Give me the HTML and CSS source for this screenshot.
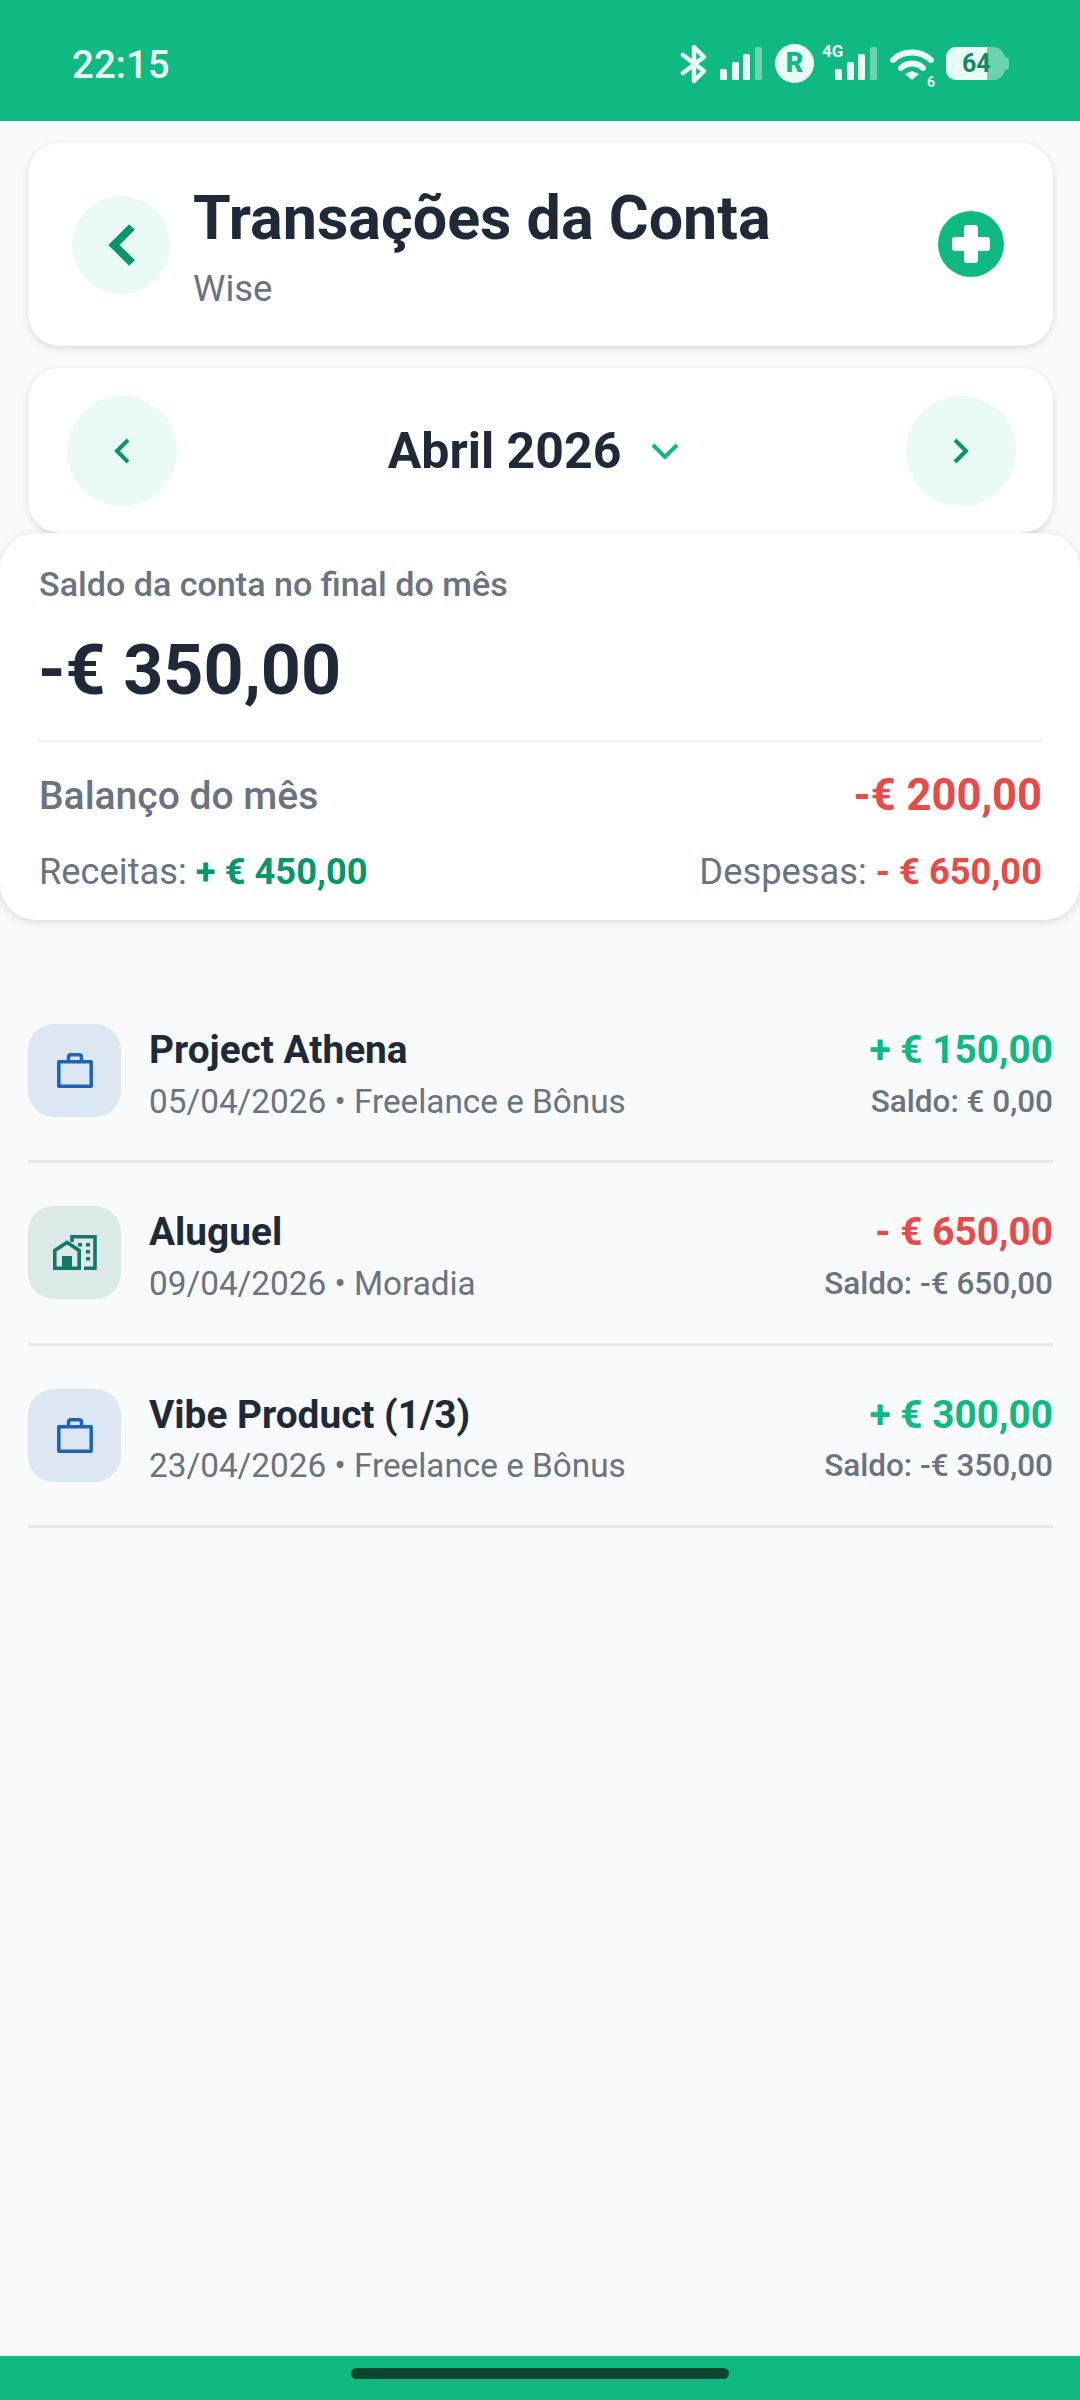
FILE: index.html
```html
<!DOCTYPE html>
<html lang="pt">
<head>
<meta charset="utf-8">
<title>Transações da Conta</title>
<link rel="stylesheet" href="styles.css">
</head>
<body>
<div class="app">
  <header class="status">
    <span class="time">22:15</span>
    <div class="status-icons">
      <svg class="i-bt" width="28" height="40" viewBox="0 0 28 40"><path d="M3 11 L24 27 L14 37 V3 L24 13 L3 29" fill="none" stroke="#e9fbf4" stroke-width="4.500" stroke-linecap="round" stroke-linejoin="round"/></svg>
      <svg class="i-sig" width="42" height="34" viewBox="0 0 42 34"><rect x="0" y="22" width="7" height="11" rx="1.500" fill="#e9fbf4"/><rect x="12" y="15" width="7" height="18" rx="1.500" fill="#e9fbf4"/><rect x="23" y="7" width="7" height="26" rx="1.500" fill="#e9fbf4"/><rect x="35" y="0" width="7" height="33" rx="1.500" fill="#6bd3ae"/></svg>
      <span class="roam">R</span>
      <div class="sig4g">
        <span class="net">4G</span>
        <svg width="42" height="34" viewBox="0 0 42 34"><rect x="0" y="22" width="7" height="11" rx="1.500" fill="#e9fbf4"/><rect x="12" y="15" width="7" height="18" rx="1.500" fill="#e9fbf4"/><rect x="23" y="7" width="7" height="26" rx="1.500" fill="#e9fbf4"/><rect x="35" y="0" width="7" height="33" rx="1.500" fill="#6bd3ae"/></svg>
      </div>
      <div class="wifi">
        <svg width="44" height="34" viewBox="0 0 44 34"><path d="M3 12 C13 2 31 2 41 12" fill="none" stroke="#e9fbf4" stroke-width="6" stroke-linecap="round"/><path d="M11 20 C17 14 27 14 33 20" fill="none" stroke="#e9fbf4" stroke-width="6" stroke-linecap="round"/><path d="M15 26 L22 23 L29 26 L22 32 Z" fill="#e9fbf4"/></svg>
        <span class="wifi-n">6</span>
      </div>
      <div class="battery"><span class="battery-fill"></span><span class="battery-n">64</span></div>
    </div>
  </header>

  <main class="content">
    <section class="card title-card">
      <button class="circle back">
        <svg class="back-chevron" width="28" height="42" viewBox="0 0 28 42"><path d="M24 3 L6 21 L24 39" fill="none" stroke="#059669" stroke-width="8"/></svg>
      </button>
      <div class="title-text">
        <h1>Transações da Conta</h1>
        <p>Wise</p>
      </div>
      <span class="add">
        <svg width="40" height="40" viewBox="0 0 40 40"><rect x="13" y="1" width="14" height="38" rx="3" fill="#fff"/><rect x="1" y="13" width="38" height="14" rx="3" fill="#fff"/></svg>
      </span>
    </section>

    <section class="card month-card">
      <button class="circle nav">
        <svg width="16" height="26" viewBox="0 0 16 26"><path d="M14 2 L3 13 L14 24" fill="none" stroke="#059669" stroke-width="4"/></svg>
      </button>
      <div class="month"><span>Abril 2026</span>
        <svg width="28" height="18" viewBox="0 0 28 18"><path d="M2 3 L14 15 L26 3" fill="none" stroke="#10b981" stroke-width="4"/></svg>
      </div>
      <button class="circle nav">
        <svg width="16" height="26" viewBox="0 0 16 26"><path d="M2 2 L13 13 L2 24" fill="none" stroke="#059669" stroke-width="4"/></svg>
      </button>
    </section>

    <section class="summary">
      <p class="sum-label">Saldo da conta no final do mês</p>
      <p class="sum-value">-€ 350,00</p>
      <div class="sum-rule"></div>
      <div class="sum-row balance">
        <span>Balanço do mês</span>
        <strong class="red">-€ 200,00</strong>
      </div>
      <div class="sum-row detail">
        <span>Receitas: <b class="deep-green">+ € 450,00</b></span>
        <span>Despesas: <b class="red">- € 650,00</b></span>
      </div>
    </section>

    <ul class="list">
      <li class="tx">
        <span class="tx-icon blue">
          <svg width="36" height="35" viewBox="0 0 36 35"><path d="M1.800 8.800 H34.200 V33.200 H1.800 Z M11.500 8.500 V4.500 Q11.500 1.800 14 1.800 H22 Q24.500 1.800 24.500 4.500 V8.500" fill="none" stroke="#1e63b8" stroke-width="3.500" stroke-linejoin="round"/></svg>
        </span>
        <div class="tx-main"><div class="tx-name">Project Athena</div><div class="tx-sub">05/04/2026 • Freelance e Bônus</div></div>
        <div class="tx-side"><div class="tx-amt green">+ € 150,00</div><div class="tx-bal">Saldo: € 0,00</div></div>
      </li>
      <li class="tx">
        <span class="tx-icon teal">
          <svg width="44" height="35" viewBox="0 0 44 35"><path d="M19 7 V1.800 H42 V33.200 H31" fill="none" stroke="#14776a" stroke-width="3.600"/><path d="M1.800 33.200 V15.500 L14 7.500 L26.200 15.500 V33.200 Z" fill="none" stroke="#14776a" stroke-width="3.600"/><rect x="9" y="21" width="10" height="13" fill="#14776a"/><rect x="33" y="8" width="4" height="3.500" fill="#14776a"/><rect x="33" y="15" width="4" height="3.500" fill="#14776a"/><rect x="33" y="22" width="4" height="3.500" fill="#14776a"/><rect x="25" y="8" width="4" height="3.500" fill="#14776a"/></svg>
        </span>
        <div class="tx-main"><div class="tx-name">Aluguel</div><div class="tx-sub">09/04/2026 • Moradia</div></div>
        <div class="tx-side"><div class="tx-amt red">- € 650,00</div><div class="tx-bal">Saldo: -€ 650,00</div></div>
      </li>
      <li class="tx">
        <span class="tx-icon blue">
          <svg width="36" height="35" viewBox="0 0 36 35"><path d="M1.800 8.800 H34.200 V33.200 H1.800 Z M11.500 8.500 V4.500 Q11.500 1.800 14 1.800 H22 Q24.500 1.800 24.500 4.500 V8.500" fill="none" stroke="#1e63b8" stroke-width="3.500" stroke-linejoin="round"/></svg>
        </span>
        <div class="tx-main"><div class="tx-name">Vibe Product (1/3)</div><div class="tx-sub">23/04/2026 • Freelance e Bônus</div></div>
        <div class="tx-side"><div class="tx-amt green">+ € 300,00</div><div class="tx-bal">Saldo: -€ 350,00</div></div>
      </li>
    </ul>
  </main>

  <footer class="navbar"><span class="home-pill"></span></footer>
</div>
</body>
</html>
```
FILE: styles.css
```css
* { box-sizing: border-box; }
html, body { margin: 0; padding: 0; }
body { font-family: Roboto, "Noto Sans", sans-serif; background: #f9fafb; color: #1f2937; }
h1, p, ul { margin: 0; padding: 0; }
button { border: 0; padding: 0; font: inherit; }

.app { width: 1080px; height: 2400px; display: flex; flex-direction: column; overflow: hidden; }

.status { height: 121px; flex: none; background: #10b981; display: flex; align-items: flex-start; justify-content: space-between; padding: 43px 71px 0 72px; color: #e9fbf4; }
.time { font-size: 38.500px; font-weight: 500; line-height: 44px; }
.status-icons { display: flex; align-items: flex-start; height: 44px; }
.i-bt { margin-top: 1px; }
.i-sig { margin: 4px 0 0 12px; }
.roam { width: 39px; height: 39px; margin: 1px 0 0 13px; border-radius: 50%; background: #e9fbf4; color: #10b981; font-size: 27px; font-weight: 900; line-height: 39px; text-align: center; }
.sig4g { position: relative; width: 55px; height: 44px; margin-left: 8px; display: flex; justify-content: flex-end; align-items: flex-start; }
.sig4g svg { margin-top: 4px; }
.net { position: absolute; left: 0; top: -2px; font-size: 17px; font-weight: 700; line-height: 20px; }
.wifi { position: relative; width: 44px; height: 44px; margin-left: 13px; }
.wifi svg { margin-top: 5px; }
.wifi-n { position: absolute; right: -1px; bottom: -3px; font-size: 14px; font-weight: 700; line-height: 16px; }
.battery { position: relative; width: 59px; height: 33px; margin: 4px 4px 0 12px; border-radius: 10px 12px 12px 10px; background: #6bd3ae; }
.battery::after { content: ""; position: absolute; right: -4px; top: 10px; width: 4px; height: 13px; border-radius: 0 4px 4px 0; background: #6bd3ae; }
.battery-fill { display: block; width: 41px; height: 100%; border-radius: 10px 0 0 10px; background: #e9fbf4; }
.battery-n { position: absolute; left: 16px; top: 3px; color: #0b8a62; font-size: 25px; font-weight: 700; line-height: 28px; }

.content { flex: 1; display: flex; flex-direction: column; padding-top: 22px; }

.card { margin: 0 27px 0 28px; background: #fff; border-radius: 32px; box-shadow: 0 2px 6px rgba(31, 41, 55, .16); display: flex; align-items: center; }
.circle { flex: none; display: flex; align-items: center; justify-content: center; border-radius: 50%; background: #e9fbf4; }

.title-card { height: 203px; padding: 0 49px 0 44px; }
.back { width: 98px; height: 98px; }
.back-chevron { margin-left: 2px; }
.title-text { flex: 1; align-self: flex-start; margin-left: 23px; padding-top: 41px; }
h1 { font-size: 61px; font-weight: 700; line-height: 68px; }
.title-text p { font-size: 36.500px; color: #6b7280; line-height: 42px; margin-top: 16px; }
.add { width: 66px; height: 66px; margin-bottom: 2px; border-radius: 50%; background: #10b981; display: flex; align-items: center; justify-content: center; }

.month-card { height: 165px; margin-top: 22px; padding: 0 37px 0 39px; justify-content: space-between; }
.nav { width: 110px; height: 110px; }
.month { display: flex; align-items: center; gap: 30px; margin-right: 16px; font-size: 50px; font-weight: 700; }

.summary { position: relative; background: #fff; border-radius: 36px; height: 387px; padding: 32px 38px 0 39px; box-shadow: 0 2px 8px rgba(31, 41, 55, .16); }
.sum-label { font-size: 34.100px; font-weight: 500; color: #6b7280; line-height: 38px; }
.sum-value { font-size: 70px; font-weight: 700; line-height: 88px; margin: 23px 0 0 -1px; }
.sum-rule { height: 2px; background: #f0f1f3; margin: 26px 0 0 -1px; }
.sum-row { display: flex; justify-content: space-between; align-items: center; }
.balance { margin-top: 31px; font-size: 39px; line-height: 46px; font-weight: 500; color: #6b7280; }
.balance strong { font-size: 43.500px; font-weight: 700; }
.detail { margin-top: 32px; font-size: 36.300px; line-height: 42px; color: #6b7280; }
.detail b { font-weight: 700; }
.red { color: #e84949; }
.green { color: #10b981; }
.deep-green { color: #059669; }

.list { list-style: none; margin: 61px 27px 0 28px; }
.tx { height: 182.400px; display: flex; align-items: flex-start; padding-top: 43px; border-bottom: 3px solid #e5e7eb; }
.tx-icon { flex: none; width: 93px; height: 93px; border-radius: 26px; display: flex; align-items: center; justify-content: center; }
.tx-icon.blue { background: #dde7f4; }
.tx-icon.teal { background: #dbe9e7; }
.tx-main { flex: 1; margin-left: 28px; padding-top: 3px; }
.tx-name { font-size: 38.800px; font-weight: 700; line-height: 46px; }
.tx-sub { font-size: 33.300px; color: #6b7280; line-height: 40px; margin-top: 8.500px; }
.tx-side { text-align: right; padding-top: 3px; }
.tx-amt { font-size: 38.800px; font-weight: 700; line-height: 46px; }
.tx-bal { font-size: 31.500px; font-weight: 500; color: #6b7280; line-height: 38px; margin-top: 9.500px; }

.navbar { flex: none; height: 44px; background: #10b981; display: flex; justify-content: center; padding-top: 12px; }
.home-pill { width: 378px; height: 11px; border-radius: 6px; background: #0a4630; }
```
